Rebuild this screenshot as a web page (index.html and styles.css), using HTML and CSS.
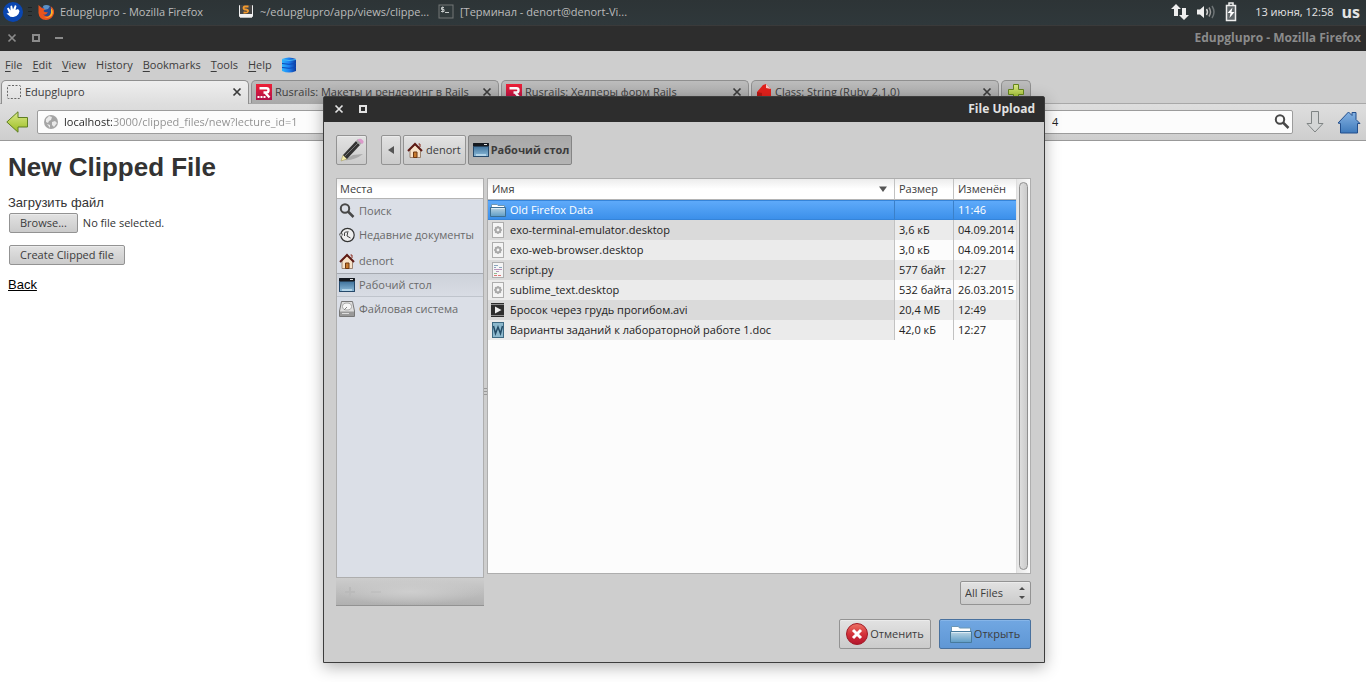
FILE: index.html
```html
<!DOCTYPE html>
<html lang="ru">
<head>
<meta charset="utf-8">
<title>Edupglupro - Mozilla Firefox</title>
<link rel="stylesheet" href="styles.css">
</head>
<body>
<svg class="defs" aria-hidden="true">
  <defs>
    <linearGradient id="g-folder" x1="0" y1="0" x2="0" y2="1"><stop offset="0" stop-color="#bdd6e4"/><stop offset="1" stop-color="#5d9cc6"/></linearGradient>
    <linearGradient id="g-desk" x1="0" y1="0" x2="0" y2="1"><stop offset="0" stop-color="#3c6f99"/><stop offset="1" stop-color="#8ab9d8"/></linearGradient>
    <linearGradient id="g-green" x1="0" y1="0" x2="0" y2="1"><stop offset="0" stop-color="#dbe98a"/><stop offset="1" stop-color="#9bbd22"/></linearGradient>
    <linearGradient id="g-red" x1="0" y1="0" x2="0" y2="1"><stop offset="0" stop-color="#ee7466"/><stop offset=".5" stop-color="#d4323a"/><stop offset="1" stop-color="#b3142d"/></linearGradient>
    <linearGradient id="g-blue" x1="0" y1="0" x2="0" y2="1"><stop offset="0" stop-color="#86b3e3"/><stop offset="1" stop-color="#3f7abb"/></linearGradient>
    <linearGradient id="g-db" x1="0" y1="0" x2="1" y2="0"><stop offset="0" stop-color="#2cb4fb"/><stop offset=".5" stop-color="#1c80f3"/><stop offset="1" stop-color="#0c3a9c"/></linearGradient>
    <linearGradient id="g-rails" x1="0" y1="0" x2="0" y2="1"><stop offset="0" stop-color="#ee2036"/><stop offset="1" stop-color="#b01048"/></linearGradient>
  </defs>
  <symbol id="i-folder" viewBox="0 0 16 14"><path d="M1.5 12V1.500H7L8 2.500H14.500V12Z" fill="#fff" stroke="#6d97b5"/><path d="M.5 4.500H15.500V13.500H.5Z" fill="url(#g-folder)" stroke="#3d6f93"/><path d="M1.500 5.500H14.500" stroke="#dcecf5"/></symbol>
  <symbol id="i-desk" viewBox="0 0 16 14"><rect width="16" height="14" rx="1" fill="#1c3853"/><rect x="1" y="3" width="14" height="10" fill="url(#g-desk)"/><path d="M0 1Q0 0 1 0H15Q16 0 16 1V3.500H0Z" fill="#15191f"/><path d="M11 1.500H14" stroke="#ddd"/><path d="M3 13.500V11H13V13.500Z" fill="#b3d4e8"/><path d="M.5 3V13.500H15.500V3" fill="none" stroke="#25496b"/></symbol>
  <symbol id="i-home" viewBox="0 0 16 16"><path d="M3 7V15.500H13.500V7L8 2.500Z" fill="#f7e2c8" stroke="#8a6f59" stroke-width=".8"/><path d="M6.500 15.500V10H10V15.500Z" fill="#c87a2d" stroke="#6f3810"/><path d="M11.500 2H13V5" fill="none" stroke="#8b2a1d"/><path d="M1 9L8 2L15 9" fill="none" stroke="#5e1a14" stroke-width="2"/></symbol>
  <symbol id="i-search" viewBox="0 0 16 16"><circle cx="6" cy="5.500" r="4.200" fill="none" stroke="#484848" stroke-width="2"/><path d="M9 8.500L14.500 14" stroke="#484848" stroke-width="2.500"/></symbol>
  <symbol id="i-file" viewBox="0 0 12 16"><rect x=".5" y=".5" width="11" height="15" fill="#f4f4f4" stroke="#adadad"/></symbol>
  <symbol id="i-gear" viewBox="-2 0 16 16"><use href="#i-file" width="12" height="16"/><circle cx="6" cy="8" r="2.400" fill="none" stroke="#a9a9a9" stroke-width="2"/><path d="M6 4V5M6 11V12M2 8H3M9 8H10M3.200 5.200L4 6M8 10L8.800 10.800M8.800 5.200L8 6M4 10L3.200 10.800" stroke="#a9a9a9" stroke-width="1.500"/></symbol>
  <symbol id="i-close" viewBox="0 0 10 10"><path d="M1.500 1.500L8.500 8.500M8.500 1.500L1.500 8.500" stroke="currentColor" stroke-width="1.700" fill="none"/></symbol>
  <symbol id="i-max" viewBox="0 0 8 8"><rect x="1" y="1" width="6" height="6" fill="none" stroke="currentColor" stroke-width="2"/></symbol>
  <symbol id="i-rails" viewBox="0 0 16 16"><rect width="16" height="16" fill="url(#g-rails)"/><path d="M3.500 4.200H10.500Q12.500 4.200 12.500 6.200Q12.500 8.500 10.500 8.500H7.500M9 8.500L13.500 13.500" fill="none" stroke="#fff" stroke-width="2.400"/><path d="M1.500 13H3.500M4.500 13H6.500M7.500 13H9.500" stroke="#fff" stroke-width="2"/></symbol>
</svg>

<header class="panel">
  <button class="whisker" aria-label="Applications"><svg width="20" height="20" viewBox="0 0 20 20"><circle cx="10" cy="10" r="10" fill="#0a46b0"/><path d="M3.500 11.500L6 11L4 6.500L5.500 5.500L7.500 8.500L7.500 4L9 3.500L10 7.500L12 3L13.500 4L12.500 8L15 7L16.500 9L15.500 12Q13 15.500 9.500 15Q7 15 6 13.500Z" fill="#fff"/></svg></button>
  <span class="grip"></span>
  <nav class="tasks">
    <button class="task"><svg width="16" height="16" viewBox="0 0 16 16"><circle cx="8.500" cy="8" r="6.500" fill="#244b93"/><path d="M5 2Q8 0 12 2L10 5L6 6Z" fill="#5b91c6"/><path d="M.5 1L4 4L7 5L5.500 7Q7 9 10 8Q8 12 5 10Q8 14 12 11Q15 8 12.500 2Q17 5 16 9.500Q14 16 8 16Q1 15.500 .5 9Z" fill="#e8541e"/><path d="M13 4Q16.500 8 13.500 12Q10 15 6 13Q12 14 13 9Z" fill="#f8b62d"/></svg><span>Edupglupro - Mozilla Firefox</span></button>
    <button class="task"><svg width="16" height="16" viewBox="0 0 16 16"><rect x="1" y="1" width="14" height="12" rx="1" fill="#f1f1f1"/><rect x="2" y="1" width="12" height="9" fill="#454545"/><path d="M10.500 2.500H7Q5.500 2.500 5.500 4T8 5.500Q10.500 6 10 7.500T5.500 8.500" fill="none" stroke="#f49a2c" stroke-width="1.800"/><path d="M2 13.500H14" stroke="#bbb"/></svg><span>~/edupglupro/app/views/clippe...</span></button>
    <button class="task"><svg width="16" height="16" viewBox="0 0 16 16"><rect x="1" y="1" width="14" height="13" fill="#30393b" stroke="#737777"/><path d="M6 3.500H3.500V5.500H6V7.500H3M4.700 2.500V8.500M7 8.500H11" fill="none" stroke="#c5c9c9"/></svg><span>[Терминал - denort@denort-Vi...</span></button>
  </nav>
  <div class="tray">
    <svg width="18" height="18" viewBox="0 0 18 18"><path d="M5 1L10 6H7V13H3V6H0ZM13 17L8 12H11V5H15V12H18Z" fill="#eee"/></svg>
    <svg width="20" height="16" viewBox="0 0 20 16"><path d="M0 5.500H3L7 2V14L3 10.500H0Z" fill="#eee"/><path d="M9.500 5Q11.500 8 9.500 11" stroke="#ccc" stroke-width="1.500" fill="none"/><path d="M12 3.500Q15 8 12 12.500" stroke="#999" stroke-width="1.500" fill="none"/><path d="M15 2Q19 8 15 14" stroke="#6d7375" stroke-width="1.500" fill="none"/></svg>
    <svg width="12" height="20" viewBox="0 0 12 20"><path d="M4 3V1H8V3" fill="none" stroke="#eee" stroke-width="1.500"/><rect x="1.500" y="3.500" width="9" height="15" fill="#5f6669" stroke="#eee" stroke-width="1.500"/><path d="M7.500 5.500L2.500 11H5.500L4.500 16L9.500 10H6.500Z" fill="#fff"/></svg>
    <time class="clock">13 июня, 12:58</time>
    <b class="layout">us</b>
  </div>
</header>

<div class="titlebar">
  <button aria-label="Close"><svg width="10" height="10"><use href="#i-close"/></svg></button>
  <button aria-label="Maximize"><svg width="8" height="8"><use href="#i-max"/></svg></button>
  <button aria-label="Minimize"><svg width="8" height="8"><path d="M0 4H8" stroke="currentColor" stroke-width="2"/></svg></button>
  <strong>Edupglupro - Mozilla Firefox</strong>
</div>

<nav class="menubar">
  <button><u>F</u>ile</button><button><u>E</u>dit</button><button><u>V</u>iew</button><button>Hi<u>s</u>tory</button><button><u>B</u>ookmarks</button><button><u>T</u>ools</button><button><u>H</u>elp</button>
  <svg width="14" height="16" viewBox="0 0 14 16"><path d="M0 2Q7-1 14 2V14Q7 17 0 14Z" fill="url(#g-db)"/><path d="M0 2.500Q7 4.500 14 2.500" stroke="#47bbf8" fill="none"/><path d="M0 6.500Q7 8 14 6.500M0 10.500Q7 12 14 10.500" stroke="#0a48b7" fill="none"/></svg>
</nav>

<div class="tabs">
  <div class="tab active"><svg width="16" height="16" viewBox="0 0 16 16"><rect x="1.500" y="1.500" width="13" height="13" rx="1" fill="none" stroke="#666" stroke-dasharray="2 1.500"/></svg><span>Edupglupro</span><button aria-label="Close tab"><svg width="10" height="10"><use href="#i-close"/></svg></button></div>
  <div class="tab"><svg width="16" height="16"><use href="#i-rails"/></svg><span>Rusrails: Макеты и рендеринг в Rails</span><button aria-label="Close tab"><svg width="10" height="10"><use href="#i-close"/></svg></button></div>
  <div class="tab"><svg width="16" height="16"><use href="#i-rails"/></svg><span>Rusrails: Хелперы форм Rails</span><button aria-label="Close tab"><svg width="10" height="10"><use href="#i-close"/></svg></button></div>
  <div class="tab"><svg width="16" height="16" viewBox="0 0 16 16"><path d="M1 8L7 1L10 0L15 5V15L6 15L1 12Z" fill="#e3211c"/><path d="M10 0L15 5L10 4Z" fill="#f6c9c5"/><path d="M1 8L6 9L6 15L1 12Z" fill="#b81713"/></svg><span>Class: String (Ruby 2.1.0)</span><button aria-label="Close tab"><svg width="10" height="10"><use href="#i-close"/></svg></button></div>
  <button class="newtab" aria-label="New tab"><svg width="16" height="16" viewBox="0 0 16 16"><path d="M5.500 .5H10.500V5.500H15.500V10.500H10.500V15.500H5.500V10.500H.5V5.500H5.500Z" fill="url(#g-green)" stroke="#65861d"/></svg></button>
</div>

<div class="navbar">
  <button aria-label="Back"><svg width="22" height="22" viewBox="0 0 22 22"><path d="M.8 11L12 .8V6.500H21.500V16H12V21.200Z" fill="url(#g-green)" stroke="#5f7f22"/></svg></button>
  <div class="field url"><svg width="14" height="14" viewBox="0 0 14 14"><circle cx="7" cy="7" r="7" fill="#a5a5a5"/><path d="M2 4L5 1L8 2L7 5L5 6L4 8L2 7ZM8 7L11 6L13 8L10 12L8 10ZM3 9L6 10L6 13Z" fill="#e9e9e9"/></svg><input type="text" aria-label="Address" value="localhost:3000/clipped_files/new?lecture_id=1"></div>
  <div class="field find"><input type="text" aria-label="Search" value="4"><svg width="16" height="16"><use href="#i-search"/></svg></div>
  <button class="downloads" aria-label="Downloads"><svg width="18" height="22" viewBox="0 0 18 22"><path d="M5.500 .5H12.500V12.500H17L9 21L1 12.500H5.500Z" fill="#d4d6d6" stroke="#7f8484"/></svg></button>
  <button aria-label="Home"><svg width="24" height="23" viewBox="0 0 24 23"><path d="M1 12L11.500 1L15 4.500V1.500H19V8.500L23 12.500H20.500V22H3.500V12.500Z" fill="url(#g-blue)" stroke="#234f8d"/></svg></button>
</div>

<main class="page">
  <h1>New Clipped File</h1>
  <form>
    <label class="caption" for="file">Загрузить файл</label>
    <div class="filepick"><label class="btn" for="file">Browse...</label><span>No file selected.</span><input id="file" type="file"></div>
    <button type="button" class="btn">Create Clipped file</button>
  </form>
  <a href="#">Back</a>
</main>

<section class="dialog" role="dialog" aria-labelledby="dlg-title">
  <div class="dlg-head">
    <button aria-label="Close"><svg width="10" height="10"><use href="#i-close"/></svg></button>
    <button aria-label="Maximize"><svg width="8" height="8"><use href="#i-max"/></svg></button>
    <strong id="dlg-title">File Upload</strong>
  </div>
  <div class="dlg-body">
    <div class="path">
      <button class="btn edit" aria-label="Type a file name"><svg width="24" height="24" viewBox="0 0 24 24"><path d="M4 22Q14 23 23 16L13 17Z" fill="#aaa"/><path d="M1 23L3 17L7 21Z" fill="#f4ecaa" stroke="#999055" stroke-width=".5"/><path d="M3 17L16 3L20 7L7 21Z" fill="#333"/><path d="M5 18L18 5" stroke="#777"/><path d="M16 3L18 1L22 5L20 7Z" fill="#aaa"/><path d="M17.500 2Q20-.5 22.500 2T22 6Z" fill="#dc9acb"/></svg></button>
      <button class="btn prev" aria-label="Previous"><svg width="6" height="8"><path d="M6 0V8L0 4Z" fill="#555"/></svg></button>
      <button class="btn crumb"><svg width="16" height="16"><use href="#i-home"/></svg>denort</button>
      <button class="btn crumb current"><svg width="16" height="14"><use href="#i-desk"/></svg>Рабочий стол</button>
    </div>
    <div class="panes">
      <aside class="side">
        <div class="places">
          <h2>Места</h2>
          <ul>
            <li><svg width="16" height="16"><use href="#i-search"/></svg>Поиск</li>
            <li><svg width="16" height="16" viewBox="0 0 16 16"><circle cx="8.500" cy="8" r="6.700" fill="#eee" stroke="#333" stroke-width="1.200"/><path d="M9 4L8 9L11.500 11M5.500 9V6Q6 4.500 8 5" stroke="#444" fill="none"/><path d="M0 7H4L2 10Z" fill="#eee" stroke="#555" stroke-width=".7"/></svg>Недавние документы</li>
            <li class="tall"><svg width="16" height="16"><use href="#i-home"/></svg>denort</li>
            <li class="sel"><svg width="16" height="14"><use href="#i-desk"/></svg>Рабочий стол</li>
            <li><svg width="16" height="16" viewBox="0 0 16 16"><path d="M2.500 .5H13.500L15.500 10V15.500H.5V10Z" fill="#dedede" stroke="#777"/><ellipse cx="8" cy="5.500" rx="4.500" ry="3.500" fill="#f7f7f7" stroke="#aaa"/><path d="M1 10.500H15V15H1Z" fill="#999"/><path d="M3 12.500H10" stroke="#ddd"/><path d="M8 6L5 9" stroke="#888"/></svg>Файловая система</li>
          </ul>
        </div>
        <div class="side-tools"><button disabled aria-label="Add"><svg width="10" height="10"><path d="M0 5H10M5 0V10" stroke="currentColor" stroke-width="2"/></svg></button><button disabled aria-label="Remove"><svg width="10" height="10"><path d="M0 5H10" stroke="currentColor" stroke-width="1"/></svg></button></div>
      </aside>
      <span class="handle"></span>
      <div class="content">
        <div class="files">
          <div class="scroll">
          <table>
            <colgroup><col><col class="c-size"><col class="c-date"></colgroup>
            <thead><tr><th><span class="sort">Имя<svg width="8" height="6"><path d="M0 .5H8L4 6Z" fill="#555"/></svg></span></th><th>Размер</th><th>Изменён</th></tr></thead>
            <tbody>
              <tr class="sel"><td><span class="name"><svg width="16" height="14"><use href="#i-folder"/></svg>Old Firefox Data</span></td><td></td><td>11:46</td></tr>
              <tr><td><span class="name"><svg width="16" height="16"><use href="#i-gear"/></svg>exo-terminal-emulator.desktop</span></td><td>3,6 кБ</td><td>04.09.2014</td></tr>
              <tr><td><span class="name"><svg width="16" height="16"><use href="#i-gear"/></svg>exo-web-browser.desktop</span></td><td>3,0 кБ</td><td>04.09.2014</td></tr>
              <tr><td><span class="name"><svg width="16" height="16" viewBox="-2 0 16 16"><use href="#i-file" width="12" height="16"/><path d="M2 3.500H6M2 5.500H4M7 5.500H10" stroke="#8aa6be"/><path d="M2 7.500H10M4 9.500H7" stroke="#b894bb"/><path d="M2 11.500H5" stroke="#94b88f"/><path d="M2 13.500H5M6 13.500H9" stroke="#d77"/></svg>script.py</span></td><td>577 байт</td><td>12:27</td></tr>
              <tr><td><span class="name"><svg width="16" height="16"><use href="#i-gear"/></svg>sublime_text.desktop</span></td><td>532 байта</td><td>26.03.2015</td></tr>
              <tr><td><span class="name"><svg width="16" height="16" viewBox="0 0 16 16"><rect x="1" y="1" width="13" height="14" fill="#2d2d2d"/><path d="M1.500 2.500H14M1.500 13.500H14" stroke="#eee" stroke-dasharray="1 1"/><path d="M5 4.500L11.500 8L5 11.500Z" fill="#eee"/></svg>Бросок через грудь прогибом.avi</span></td><td>20,4 МБ</td><td>12:49</td></tr>
              <tr><td><span class="name"><svg width="16" height="16" viewBox="-2 0 16 16"><rect x=".5" y=".5" width="11" height="15" fill="#8cb8cd" stroke="#3d6982"/><path d="M1.500 4L3.500 11.500L6 5L8.500 11.500L10.500 4" fill="none" stroke="#234b66" stroke-width="1.500"/></svg>Варианты заданий к лабораторной работе 1.doc</span></td><td>42,0 кБ</td><td>12:27</td></tr>
            </tbody>
          </table>
          </div>
          <div class="track"><span class="thumb"></span></div>
        </div>
        <div class="filter"><select class="btn" aria-label="File type"><option>All Files</option></select><svg width="8" height="14" viewBox="0 0 8 14"><path d="M1 4L4 1L7 4ZM1 10L4 13L7 10Z" fill="#4d4d4d"/></svg></div>
      </div>
    </div>
    <div class="actions">
      <button class="btn"><svg width="22" height="22" viewBox="0 0 22 22"><circle cx="11" cy="11" r="10.500" fill="url(#g-red)" stroke="#a01c28"/><path d="M7 7L15 15M15 7L7 15" stroke="#fff" stroke-width="3"/></svg>Отменить</button>
      <button class="btn primary"><svg width="22" height="18" viewBox="0 0 22 18"><path d="M1.500 15V1.500H8.500L9.500 3H20.500V15Z" fill="#fff" stroke="#6d97b5"/><path d="M.5 6.500H21.500V17.500H.5Z" fill="url(#g-folder)" stroke="#477a9c"/><path d="M1.500 7.500H20.500" stroke="#dcecf5"/></svg>Открыть</button>
    </div>
  </div>
</section>
</body>
</html>
```

FILE: styles.css
```css
* { box-sizing: border-box; }

html, body { height: 100%; }

body {
  margin: 0;
  display: flex;
  flex-direction: column;
  position: relative;
  overflow: hidden;
  background: #fff;
  color: #3c3c3c;
  font: 11px/16px "Open Sans", "Noto Sans", sans-serif;
}

svg { flex: none; display: block; }
.defs { position: absolute; width: 0; height: 0; }

button {
  margin: 0;
  padding: 0;
  border: 0;
  background: none;
  color: inherit;
  font: inherit;
}

/* Desktop panel */
.panel {
  flex: none;
  display: flex;
  align-items: center;
  height: 25px;
  padding: 0 6px 2px 3px;
  background: linear-gradient(#2d3436, #2f383b);
  color: #bcbcbc;
}
.grip {
  width: 4px;
  height: 9px;
  margin: 0 6px 0 5px;
  background: repeating-linear-gradient(#1d2223 0 1px, transparent 1px 4px);
}
.tasks { display: flex; flex: 1; min-width: 0; }
.task { display: flex; align-items: center; gap: 6px; width: 200px; text-align: left; white-space: nowrap; }
.tray { display: flex; align-items: center; gap: 8px; color: #e4e4e4; }
.clock { margin-left: 10px; }
.layout { font-size: 16px; }

/* Window title bars */
.titlebar, .dlg-head {
  flex: none;
  display: flex;
  align-items: center;
  gap: 15px;
  height: 26px;
  background: #2d2d2d;
}
.titlebar { padding: 0 5px 2px 7px; border-top: 1px solid #3a3a3a; color: #8b8b8b; }
.titlebar strong, .dlg-head strong { margin-left: auto; font-size: 12px; }

/* Firefox chrome */
.menubar {
  flex: none;
  display: flex;
  align-items: center;
  gap: 10px;
  height: 29px;
  padding: 0 5px 2px;
  background: #cecece;
}
.menubar u { text-underline-offset: 2px; }

.tabs {
  flex: none;
  display: flex;
  gap: 2px;
  height: 24px;
  padding: 0 1px;
  background: #cecece;
  border-bottom: 1px solid #a8a8a8;
}
.tab, .newtab {
  border: 1px solid #8f8f8f;
  border-bottom: 0;
  border-radius: 5px 5px 0 0;
  background: linear-gradient(#bcbcbc, #a9a9a9);
}
.tab {
  display: flex;
  align-items: center;
  gap: 3px;
  flex: 0 1 248px;
  min-width: 0;
  padding: 0 6px 1px 4px;
}
.tab.active { background: linear-gradient(#eee, #dedede); margin-bottom: -1px; padding-bottom: 2px; }
.tab span { flex: 1; min-width: 0; overflow: hidden; white-space: nowrap; }
.newtab { display: flex; justify-content: center; align-items: center; width: 30px; }

.navbar {
  flex: none;
  display: flex;
  align-items: center;
  gap: 9px;
  height: 37px;
  padding: 0 5px 0 6px;
  background: linear-gradient(#dedede, #cecece);
  border-bottom: 1px solid #999;
}
.field {
  display: flex;
  align-items: center;
  height: 24px;
  border: 1px solid #9c9c9c;
  border-radius: 2px;
  background: #fcfcfc;
}
.field input {
  flex: 1;
  min-width: 0;
  padding: 0;
  border: 0;
  background: none;
  color: #222;
  font: inherit;
}
.url { flex: 1; padding: 0 6px; gap: 6px; }
.url input {
  background: linear-gradient(90deg, #222 48px, #8d8d8d 48px);
  background-clip: text;
  -webkit-background-clip: text;
  color: transparent;
}
.find { width: 262px; margin-right: 4px; padding: 0 2px 0 20px; }
.downloads { margin-right: 4px; }

/* Web page */
.page { flex: 1; padding: 8px; color: #333; font: 13px/18px "Liberation Sans", Arial, sans-serif; }
.page h1 { margin: 0 0 9px; font-size: 26px; line-height: 36px; }
.page a { color: #000; }
.page form { margin-bottom: 11px; }
.page .caption { display: block; margin-bottom: 1px; }
.page .btn { display: inline-block; height: 20px; padding: 0 10px; margin: 0 1px; }
.filepick { display: flex; align-items: center; gap: 4px; margin-bottom: 12px; font: 11px/18px "Open Sans", "Noto Sans", sans-serif; }
.filepick input { position: absolute; width: 1px; height: 1px; opacity: 0; }

.btn {
  border: 1px solid #939393;
  border-radius: 2px;
  background: linear-gradient(#e2e2e2, #cbcbcb);
  box-shadow: inset 0 1px #ebebeb;
  color: #3c3c3c;
  font: 11px/18px "Open Sans", "Noto Sans", sans-serif;
  white-space: nowrap;
}

/* File chooser */
.dialog {
  position: absolute;
  inset: 96px 321px 19px 323px;
  display: flex;
  flex-direction: column;
  border: 1px solid #3d3d3d;
  border-radius: 2px 2px 0 0;
  background: #cecece;
  box-shadow: 0 4px 16px rgba(0, 0, 0, .3);
}
.dlg-head { height: 25px; padding: 0 9px 2px 10px; color: #e2e2e2; }
.dlg-body { flex: 1; min-height: 0; display: flex; flex-direction: column; gap: 13px; padding: 13px 13px 13px 12px; }

.path { display: flex; gap: 2px; height: 30px; }
.path .btn { display: flex; align-items: center; justify-content: center; gap: 3px; padding: 0 4px; }
.path .edit { width: 31px; margin-right: 12px; padding: 0; }
.path .prev { width: 20px; }
.path .crumb { padding-left: 3px; }
.path .current { background: linear-gradient(#a9a9a9, #b4b4b4); border-color: #858585; box-shadow: none; gap: 2px; padding: 0 2px 0 4px; font-weight: bold; }

.panes { flex: 1; min-height: 0; display: flex; }
.side { display: flex; flex-direction: column; width: 148px; }
.places { flex: 1; border: 1px solid #aeaeae; background: #dbdfe7; }
.places h2, .files th {
  background: linear-gradient(#ececec, #fff 50%);
  border-bottom: 1px solid #b4b4b4;
  color: #3c3c3c;
  font-size: 11px;
  font-weight: normal;
}
.places h2 { margin: 0; padding: 0 3px; line-height: 19px; }
.places ul { margin: 0; padding: 0; list-style: none; color: #6a6a6a; }
.places li { display: flex; align-items: center; gap: 4px; height: 24px; padding: 0 2px; white-space: nowrap; }
.places .tall { height: 26px; padding-top: 2px; }
.places .sel { border-top: 1px solid #a5a9b0; border-bottom: 1px solid #bfc4cc; background: linear-gradient(#cdd2da, #d8dce4); }
.side-tools {
  display: flex;
  align-items: center;
  gap: 16px;
  height: 28px;
  padding: 0 9px;
  border-bottom: 1px solid #929292;
  background: radial-gradient(ellipse at center, #cecece, transparent 70%), linear-gradient(#cdcdcd, #b0b0b0);
  color: #bababa;
}
.handle {
  align-self: center;
  width: 3px;
  height: 8px;
  background: repeating-linear-gradient(#999 0 1px, transparent 1px 3px);
}

.content { flex: 1; min-width: 0; display: flex; flex-direction: column; gap: 7px; }
.files { flex: 1; min-height: 0; display: flex; border: 1px solid #aeaeae; background: #fcfcfc; }
.scroll { flex: 1; min-width: 0; overflow: hidden; }
.files table { width: 100%; table-layout: fixed; border-collapse: separate; border-spacing: 0; color: #222; }
.c-size { width: 59px; }
.c-date { width: 63px; }
.files th, .files td { height: 20px; padding: 0 0 0 4px; border-left: 1px solid #c2c2c2; line-height: 16px; text-align: left; white-space: nowrap; overflow: hidden; }
.files th:first-child, .files td:first-child { border-left: 0; }
.files th { height: 21px; }
.files td:first-child { padding-left: 2px; background: #ebebeb; }
.files tbody tr:nth-child(even) td { background: #ebebeb; }
.files tbody tr:nth-child(even) td:first-child { background: #dadada; }
.files tbody tr.sel td {
  background: linear-gradient(#5eaafa, #3c90ea);
  border-top: 1px solid #3584d9;
  border-bottom: 1px solid #3584d9;
  border-left-color: #3b80c8;
  color: #fff;
}
.name { display: flex; align-items: center; gap: 4px; }
.sort { display: flex; align-items: center; justify-content: space-between; padding-right: 7px; }
.track { width: 14px; padding: 3px 2px; border-left: 1px solid #ddd; background: linear-gradient(90deg, #e6e6e6, #fafafa); }
.thumb { display: block; height: 100%; border: 1px solid #8f8f8f; border-radius: 5px; background: linear-gradient(90deg, #dedede, #cbcbcb); }

.filter { display: grid; align-self: flex-end; align-items: center; width: 71px; margin-bottom: 1px; }
.filter select { grid-area: 1 / 1; height: 24px; padding: 0 4px; appearance: none; }
.filter svg { grid-area: 1 / 1; justify-self: end; margin-right: 5px; pointer-events: none; }

.actions { display: flex; justify-content: flex-end; gap: 8px; height: 30px; }
.actions .btn { display: flex; align-items: center; justify-content: center; gap: 2px; width: 92px; }
.actions .primary { border-color: #49719e; background: linear-gradient(#71a7e2, #5f97d5); box-shadow: inset 0 1px #86b5e8; }
```
